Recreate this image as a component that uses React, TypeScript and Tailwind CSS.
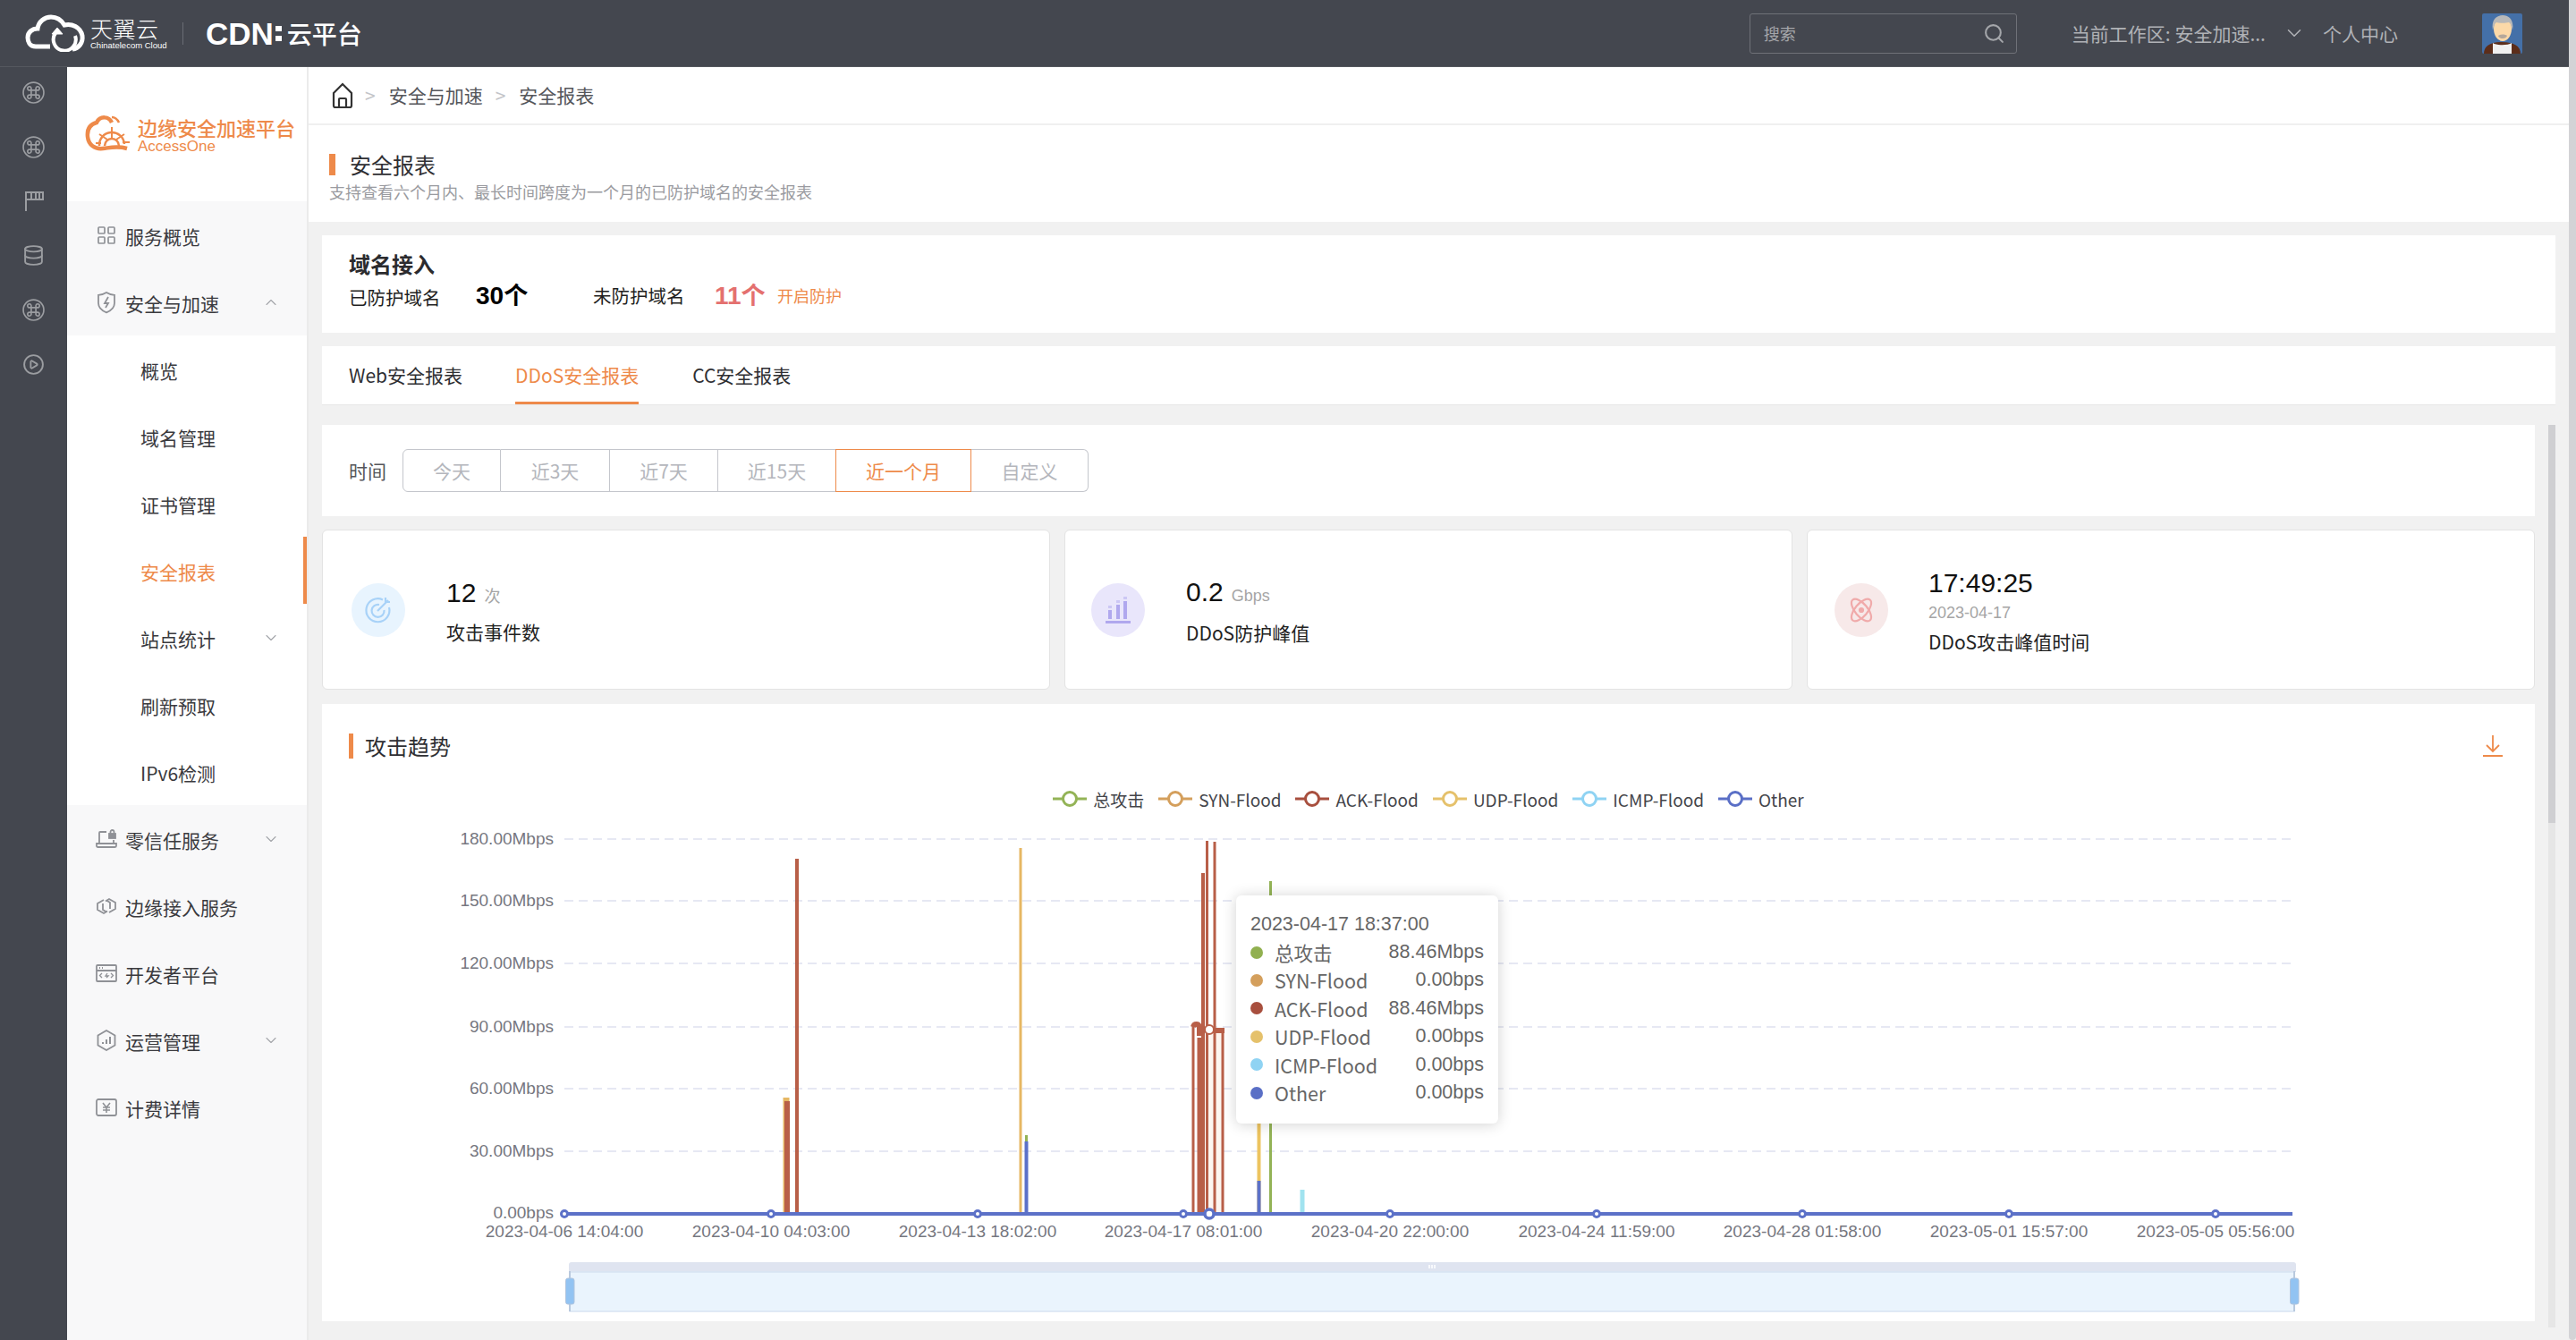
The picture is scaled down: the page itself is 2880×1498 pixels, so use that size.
import React from "react";
import { ChevronDown, ChevronUp, Database, CirclePlay, Search, LayoutGrid } from "lucide-react";

const CommandCircle = () => (
  <svg width="25" height="25" viewBox="0 0 24 24" fill="none" stroke="#9b9da1" strokeWidth="1.6">
    <circle cx="12" cy="12" r="11" />
    <path d="M9.5 9.5h5v5h-5zM9.5 9.5H8A2 2 0 1 1 9.5 8zM14.5 9.5V8A2 2 0 1 1 16 9.5zM14.5 14.5H16A2 2 0 1 1 14.5 16zM9.5 14.5V16A2 2 0 1 1 8 14.5z" />
  </svg>
);

const FlagIcon = () => (
  <svg width="24" height="24" viewBox="0 0 24 24" fill="none" stroke="#9b9da1" strokeWidth="2">
    <path d="M3 1v22M3 2h19v8H3M9 3v6M14 3v6M18 3v6" />
  </svg>
);

const ShieldBolt = () => (
  <svg width="24" height="26" viewBox="0 0 24 26" fill="none" stroke="#8f9196" strokeWidth="1.8">
    <path d="M12 2c3 2 6 2.6 9 2.8v9c0 5-4 8.600-9 10.500-5-1.900-9-5.500-9-10.500v-9C6 4.600 9 4 12 2z" />
    <path d="M14 7l-4 7h4l-3 5" />
  </svg>
);

const LaptopLock = () => (
  <svg width="24" height="24" viewBox="0 0 24 24" fill="none" stroke="#8f9196" strokeWidth="1.800">
    <path d="M12 4H5a1 1 0 0 0-1 1v12M1 17h22v2.500a1.500 1.500 0 0 1-1.500 1.500h-19A1.500 1.500 0 0 1 1 19.500zM20 13v4" />
    <rect x="15" y="6" width="7" height="5" fill="#8f9196" />
    <path d="M16.500 6V4a2 2 0 0 1 4 0v2" />
  </svg>
);

const HexLink = () => (
  <svg width="24" height="24" viewBox="0 0 24 24" fill="none" stroke="#8f9196" strokeWidth="1.800">
    <path d="M9 5L2 9v7l7 4 4-2.500M15 19l7-4V8l-7-4-4 2.500" />
    <path d="M8 9v7l4 2.500M16 15V8l-4-2.500" />
  </svg>
);

const CodeWindow = () => (
  <svg width="24" height="24" viewBox="0 0 24 24" fill="none" stroke="#8f9196" strokeWidth="1.800">
    <rect x="1" y="3" width="22" height="18" rx="1" />
    <path d="M1 9h22M4 6h1M7 6h1" />
    <path d="M7 12l-2.500 2.500L7 17M17 12l2.500 2.500L17 17M13 12l-2 3h3l-2 2" strokeWidth="1.300" />
  </svg>
);

const HexBars = () => (
  <svg width="24" height="24" viewBox="0 0 24 24" fill="none" stroke="#8f9196" strokeWidth="1.800">
    <path d="M12 1l9.500 5.500v11L12 23l-9.500-5.500v-11z" />
    <path d="M8 16v-2M12 16v-5M16 16V8" strokeWidth="2" />
  </svg>
);

const YenBox = () => (
  <svg width="24" height="24" viewBox="0 0 24 24" fill="none" stroke="#8f9196" strokeWidth="1.800">
    <rect x="1" y="3" width="22" height="18" rx="2" />
    <path d="M8 7l4 5 4-5M8 12h8M8 15h8M12 12v6" strokeWidth="1.600" />
  </svg>
);

const BrandCloud = () => (
  <svg width="68" height="42" viewBox="0 0 68 42" fill="none" stroke="#ffffff" strokeWidth="5">
    <path d="M28 36H12C5 36 3 30 3 26c0-6 5-10 11-10 1-8 8-13 15-13 7 0 12 4 15 9 8-2 18 2 20 12 1 8-4 14-11 15" />
    <path d="M56 24a12.500 12.500 0 1 1-22-3" strokeWidth="4" />
    <path d="M30 22l6-7 6 7z" fill="#ffffff" strokeWidth="1" />
  </svg>
);

const AccessLogo = () => (
  <svg width="54" height="44" viewBox="0 0 54 44" fill="none" stroke="#ee8a4a" strokeWidth="4.500">
    <path d="M30 9C27 2 17 1 13 9 6 11 2 16 3 25c1 9 8 14 17 13 9-1 16-3 27 0" />
    <path d="M38 9c-2-4-5-6-8-6" strokeWidth="2.500" />
    <path d="M16 35a14 14 0 0 1 28-2" strokeWidth="2.500" />
    <path d="M22 35a8 8 0 0 1 16 0" strokeWidth="2.500" />
    <path d="M30 14v13M16 22l9 6M44 22l-9 6M12 32h6M42 31h8" strokeWidth="2" />
  </svg>
);

const Avatar = () => (
  <svg width="45" height="45" viewBox="0 0 45 45">
    <rect width="45" height="45" rx="2" fill="#4470a8" />
    <path d="M2 45c0-8 6-13 20-13s21 5 21 13z" fill="#5c2d1a" />
    <path d="M12 45V33c4 3 17 3 21 0v12z" fill="#f0f0f0" />
    <ellipse cx="23" cy="17" rx="10" ry="14" fill="#fcd9a8" />
    <path d="M12 19c-2-12 4-17 11-17s13 5 11 17c-1-5-2-8-4-9-4 1-10 1-14 0-2 1-3 4-4 9z" fill="#b8b8b8" />
    <path d="M18 25c2-2 8-2 10 0-1 4-9 4-10 0z" fill="#b5a89a" />
  </svg>
);

const TargetIcon = () => (
  <svg width="32" height="32" viewBox="0 0 32 32" fill="none" stroke="#a8d2f8" strokeWidth="2.200">
    <path d="M21 4.500A13 13 0 1 0 28 13" />
    <path d="M17 10a7 7 0 1 0 5.500 6" />
    <path d="M15 17L27 5M24 2v5h5" />
  </svg>
);

const BarsIcon = () => (
  <svg width="30" height="32" viewBox="0 0 30 32" fill="#b0a8ee">
    <rect x="1" y="28" width="28" height="3" />
    <rect x="4" y="16" width="4" height="10" />
    <rect x="4" y="11" width="4" height="3" opacity="0.500" />
    <rect x="13" y="10" width="4" height="16" />
    <rect x="13" y="5" width="4" height="3" opacity="0.500" />
    <rect x="21" y="6" width="4" height="20" />
    <rect x="21" y="1" width="4" height="3" opacity="0.500" />
  </svg>
);

const AtomIcon = () => (
  <svg width="32" height="32" viewBox="0 0 32 32" fill="none" stroke="#f0aaaa" strokeWidth="2.200">
    <ellipse cx="16" cy="16" rx="7" ry="15" transform="rotate(40 16 16)" />
    <ellipse cx="16" cy="16" rx="7" ry="15" transform="rotate(-40 16 16)" />
    <circle cx="16" cy="16" r="2" fill="#f0aaaa" />
  </svg>
);

const railIcons = [
  <CommandCircle key="a" />,
  <CommandCircle key="b" />,
  <FlagIcon key="c" />,
  <Database key="d" size={25} color="#9b9da1" strokeWidth={1.8} />,
  <CommandCircle key="e" />,
  <CirclePlay key="f" size={25} color="#9b9da1" strokeWidth={1.8} />,
];

const SideRow = ({ icon, label, arrow, shaded }: { icon: React.ReactNode; label: string; arrow?: "up" | "down"; shaded?: boolean }) => (
  <div className={shaded ? "flex h-[75px] items-center pl-[32px] pr-[30px] bg-[#f8f8f9]" : "flex h-[75px] items-center pl-[32px] pr-[30px]"}>
    <span className="flex w-[24px] justify-center">{icon}</span>
    <span className="ml-[9px] flex-1 pt-[3px] text-[21px] leading-none text-[#3a3a3e]">{label}</span>
    {arrow === "up" && <ChevronUp size={20} color="#a3a5aa" strokeWidth={1.3} />}
    {arrow === "down" && <ChevronDown size={20} color="#a3a5aa" strokeWidth={1.3} />}
  </div>
);

const SubRow = ({ label, active, arrow }: { label: string; active?: boolean; arrow?: boolean }) => (
  <div
    className={
      active
        ? "flex h-[75px] items-center border-r-4 border-[#ee8a4a] pl-[82px] pr-[26px] text-[#ee8a4a]"
        : "flex h-[75px] items-center pl-[82px] pr-[30px] text-[#3a3a3e]"
    }
  >
    <span className="flex-1 pt-[3px] text-[21px] leading-none">{label}</span>
    {arrow && <ChevronDown size={20} color="#a3a5aa" strokeWidth={1.3} />}
  </div>
);

const Sidebar = () => (
  <aside className="flex w-[270px] shrink-0 flex-col border-r-2 border-[#ebebeb] bg-[#f8f8f9]">
    <div className="flex h-[150px] items-center bg-white pl-[20px]">
      <AccessLogo />
      <div className="ml-[5px] mt-[4px] flex flex-col">
        <span className="text-[22px] font-medium leading-[24px] text-[#ee8a4a]">边缘安全加速平台</span>
        <span className="font-['Liberation_Sans',sans-serif] text-[17px] leading-[20px] text-[#ee8a4a]">AccessOne</span>
      </div>
    </div>
    <SideRow shaded icon={<LayoutGrid size={26} color="#8f9196" strokeWidth={1.7} />} label="服务概览" />
    <SideRow shaded icon={<ShieldBolt />} label="安全与加速" arrow="up" />
    <div className="bg-white">
      <SubRow label="概览" />
      <SubRow label="域名管理" />
      <SubRow label="证书管理" />
      <SubRow label="安全报表" active />
      <SubRow label="站点统计" arrow />
      <SubRow label="刷新预取" />
      <SubRow label="IPv6检测" />
    </div>
    <SideRow icon={<LaptopLock />} label="零信任服务" arrow="down" />
    <SideRow icon={<HexLink />} label="边缘接入服务" />
    <SideRow icon={<CodeWindow />} label="开发者平台" />
    <SideRow icon={<HexBars />} label="运营管理" arrow="down" />
    <SideRow icon={<YenBox />} label="计费详情" />
  </aside>
);

const Header = () => (
  <header className="flex h-[75px] shrink-0 items-center border-b border-[#55585f] bg-[#44474f]">
    <div className="ml-[28px] flex items-center">
      <BrandCloud />
      <div className="ml-[5px] flex w-[78px] flex-col text-white">
        <span className="text-[25px] font-light leading-[26px] tracking-[0.5px]">天翼云</span>
        <span className="mt-[2px] whitespace-nowrap font-['Liberation_Sans',sans-serif] text-[9.500px] leading-[10px]">Chinatelecom Cloud</span>
      </div>
      <span className="ml-[25px] h-[25px] w-px bg-[#6a6d74]" />
      <span className="ml-[25px] font-['Liberation_Sans',sans-serif] text-[35px] font-bold leading-none text-white">CDN</span>
      <span className="ml-[2px] flex flex-col gap-[5px]">
        <span className="h-[6px] w-[7px] bg-white" />
        <span className="h-[6px] w-[7px] bg-white" />
      </span>
      <span className="ml-[6px] text-[28px] font-medium leading-none text-white">云平台</span>
    </div>
    <div className="ml-[1551px] flex h-[45px] w-[299px] items-center justify-between rounded-[3px] border border-[#6f7178] pl-[15px] pr-[12px]">
      <span className="text-[18px] leading-none text-[#a4a6aa]">搜索</span>
      <Search size={25} color="#a4a6aa" strokeWidth={2} />
    </div>
    <span className="ml-[61px] text-[21px] leading-none text-[#b0b2b6]">当前工作区: 安全加速...</span>
    <ChevronDown className="ml-[19px]" size={26} color="#b0b2b6" strokeWidth={1.4} />
    <span className="ml-[19px] text-[21px] leading-none text-[#b0b2b6]">个人中心</span>
    <span className="ml-[94px]">
      <Avatar />
    </span>
  </header>
);

const ranges = [
  { label: "今天", cls: "w-[110px] rounded-l-[6px] border border-[#c4c6cc] text-[#b4b6bc]" },
  { label: "近3天", cls: "w-[122px] border border-l-0 border-[#c4c6cc] text-[#b4b6bc]" },
  { label: "近7天", cls: "w-[121px] border border-l-0 border-[#c4c6cc] text-[#b4b6bc]" },
  { label: "近15天", cls: "w-[132px] border border-l-0 border-[#c4c6cc] text-[#b4b6bc]" },
  { label: "近一个月", cls: "w-[152px] border border-[#ee8a4a] -ml-px text-[#ee8a4a]" },
  { label: "自定义", cls: "w-[131px] rounded-r-[6px] border border-l-0 border-[#c4c6cc] text-[#b4b6bc]" },
];

const legend = [
  { label: "总攻击", color: "#93b356" },
  { label: "SYN-Flood", color: "#d49f5c" },
  { label: "ACK-Flood", color: "#a84f3e" },
  { label: "UDP-Flood", color: "#e5c16b" },
  { label: "ICMP-Flood", color: "#8fd3f3" },
  { label: "Other", color: "#5a6fc6" },
];

const tipRows = [
  { label: "总攻击", value: "88.46Mbps", color: "#91b050" },
  { label: "SYN-Flood", value: "0.00bps", color: "#d49f5c" },
  { label: "ACK-Flood", value: "88.46Mbps", color: "#a84f3e" },
  { label: "UDP-Flood", value: "0.00bps", color: "#e5c16b" },
  { label: "ICMP-Flood", value: "0.00bps", color: "#8fd3f3" },
  { label: "Other", value: "0.00bps", color: "#5a6fc6" },
];

const yAxis = [
  { y: 938, label: "180.00Mbps" },
  { y: 1007, label: "150.00Mbps" },
  { y: 1077, label: "120.00Mbps" },
  { y: 1148, label: "90.00Mbps" },
  { y: 1217, label: "60.00Mbps" },
  { y: 1287, label: "30.00Mbps" },
];

const xAxis = [
  { x: 631, label: "2023-04-06 14:04:00" },
  { x: 862, label: "2023-04-10 04:03:00" },
  { x: 1093, label: "2023-04-13 18:02:00" },
  { x: 1323, label: "2023-04-17 08:01:00" },
  { x: 1554, label: "2023-04-20 22:00:00" },
  { x: 1785, label: "2023-04-24 11:59:00" },
  { x: 2015, label: "2023-04-28 01:58:00" },
  { x: 2246, label: "2023-05-01 15:57:00" },
  { x: 2477, label: "2023-05-05 05:56:00" },
];

// vertical spikes: x, top y, stroke width, colour
const spikes = [
  { x: 879, top: 1227, w: 7, c: "#e6b763" },
  { x: 880, top: 1231, w: 6, c: "#b85f48" },
  { x: 891, top: 960, w: 4, c: "#b85f48" },
  { x: 1141, top: 948, w: 3, c: "#e6b763" },
  { x: 1147.500, top: 1269, w: 3, c: "#93b356" },
  { x: 1147.500, top: 1276, w: 4, c: "#5c71c8" },
  { x: 1334, top: 1145, w: 3, c: "#b85f48" },
  { x: 1342, top: 1160, w: 7, c: "#b85f48" },
  { x: 1345, top: 976, w: 4, c: "#b85f48" },
  { x: 1349.500, top: 940, w: 3, c: "#b85f48" },
  { x: 1358, top: 941, w: 3, c: "#b85f48" },
  { x: 1367, top: 1150, w: 3, c: "#b85f48" },
  { x: 1407.500, top: 1240, w: 4, c: "#edc460" },
  { x: 1407.500, top: 1320, w: 4, c: "#5c71c8" },
  { x: 1420.500, top: 1200, w: 3, c: "#b85f48" },
  { x: 1420.500, top: 985, w: 3, c: "#93b356" },
  { x: 1456, top: 1330, w: 5, c: "#a1e3ef" },
];

const Chart = () => (
  <div className="relative h-[571px] w-full">
    <svg width="2474" height="571" viewBox="360 906 2474 571" fontFamily="'Liberation Sans',sans-serif" fontSize="19" fill="#76777f">
      {yAxis.map((g) => (
        <g key={g.y}>
          <line x1="631" x2="2563" y1={g.y} y2={g.y} stroke="#e6e8f3" strokeWidth="2" strokeDasharray="10 6" />
          <text x="619" y={g.y + 1} textAnchor="end" dominantBaseline="middle">{g.label}</text>
        </g>
      ))}
      <text x="619" y="1357" textAnchor="end" dominantBaseline="middle">0.00bps</text>
      {xAxis.map((t) => (
        <text key={t.x} x={t.x} y="1378" textAnchor="middle" dominantBaseline="middle">{t.label}</text>
      ))}
      <rect x="1348" y="1155" width="18" height="202" fill="#fcf5f0" />
      <path d="M1334 1148c1-4 6-4 7 0v10M1350 1152h19" fill="none" stroke="#b85f48" strokeWidth="6" />
      {spikes.map((s, i) => (
        <line key={i} x1={s.x} x2={s.x} y1={s.top} y2="1357" stroke={s.c} strokeWidth={s.w} />
      ))}
      <circle cx="1352" cy="1151" r="5" fill="#ffffff" stroke="#b85f48" strokeWidth="2" />
      <line x1="631" x2="2563" y1="1357" y2="1357" stroke="#5c71c8" strokeWidth="4" />
      {xAxis.map((t) => (
        <circle key={t.x} cx={t.x} cy="1357" r="3.500" fill="#ffffff" stroke="#5c71c8" strokeWidth="3" />
      ))}
      <circle cx="1352" cy="1357" r="5" fill="#ffffff" stroke="#5c71c8" strokeWidth="3.500" />
      {/* data zoom */}
      <path d="M636 1422v-8a3 3 0 0 1 3-3h1925a3 3 0 0 1 3 3v8z" fill="#dfe4f0" />
      <rect x="637" y="1422" width="1928" height="44" fill="#eaf4fd" stroke="#d8e4f2" strokeWidth="1.500" />
      <path d="M1598 1414v4M1601 1414v4M1604 1414v4" stroke="#ffffff" strokeWidth="1.500" />
      <line x1="637" x2="637" y1="1421" y2="1466" stroke="#b9c9de" strokeWidth="2" />
      <line x1="2565" x2="2565" y1="1421" y2="1466" stroke="#b9c9de" strokeWidth="2" />
      <rect x="632.500" y="1429" width="9.500" height="29" rx="2.500" fill="#92c3f2" stroke="#b0c4de" />
      <rect x="2560.500" y="1429" width="9.500" height="29" rx="2.500" fill="#92c3f2" stroke="#b0c4de" />
    </svg>
    <div className="absolute left-[1022px] top-[95px] h-[255px] w-[293px] rounded-[6px] bg-white px-[16px] pt-[21px] shadow-[0_1px_16px_rgba(0,0,0,0.18)]">
      <div className="font-['Liberation_Sans','Noto_Sans_CJK_SC',sans-serif] text-[21.500px] leading-[22px] text-[#666]">2023-04-17 18:37:00</div>
      <div className="mt-[5px] flex flex-col">
        {tipRows.map((r) => (
          <div key={r.label} className="flex h-[31.400px] items-center">
            <span className="h-[14px] w-[14px] rounded-full" style={{ backgroundColor: r.color }} />
            <span className="ml-[13px] flex-1 text-[21.500px] leading-none text-[#666]">{r.label}</span>
            <span className="font-['Liberation_Sans',sans-serif] text-[21.500px] leading-none text-[#666]">{r.value}</span>
          </div>
        ))}
      </div>
    </div>
  </div>
);

export default function App() {
  return (
    <div className="flex h-[1498px] w-[2880px] overflow-hidden bg-[#f1f1f1] [font-family:'Noto_Sans_CJK_SC','Noto_Sans',sans-serif]">
      <div className="flex w-[2872px] flex-col">
        <Header />
        <div className="flex min-h-0 flex-1">
          <nav className="flex w-[75px] shrink-0 flex-col items-center gap-[36px] bg-[#44474f] pt-[16px]">
            {railIcons}
          </nav>
          <Sidebar />
          <main className="flex min-w-0 flex-1 flex-col">
            <div className="flex h-[65px] shrink-0 items-center border-b-2 border-[#f0f0f0] bg-white pl-[25px] text-[21px] leading-none text-[#55565b]">
              <svg width="26" height="30" viewBox="0 0 26 30" fill="none" stroke="#333" strokeWidth="2.200">
                <path d="M3 12L13 2l10 10v14a2 2 0 0 1-2 2H5a2 2 0 0 1-2-2z" />
                <path d="M9 28v-9a1 1 0 0 1 1-1h6a1 1 0 0 1 1 1v9" />
              </svg>
              <span className="ml-[12px] text-[#c3c4c8]">&gt;</span>
              <span className="ml-[15px]">安全与加速</span>
              <span className="ml-[14px] text-[#c3c4c8]">&gt;</span>
              <span className="ml-[15px]">安全报表</span>
            </div>
            <div className="flex h-[108px] shrink-0 flex-col bg-white pl-[23px] pt-[32px]">
              <div className="flex items-center">
                <span className="h-[24px] w-[7px] bg-[#ee8a4a]" />
                <span className="ml-[16px] text-[24px] leading-[24px] text-[#2f2f33]">安全报表</span>
              </div>
              <div className="mt-[6px] text-[18px] leading-[24px] text-[#9a9ba0]">支持查看六个月内、最长时间跨度为一个月的已防护域名的安全报表</div>
            </div>
            <div className="flex min-h-0 flex-1 flex-col pl-[15px] pr-[15px] pt-[15px]">
              <section className="flex h-[109px] shrink-0 flex-col bg-white pl-[30px] pt-[18px]">
                <div className="text-[24px] font-bold leading-[28px] text-[#2b2b2e]">域名接入</div>
                <div className="mt-[6px] flex items-center">
                  <span className="w-[142px] pt-[4px] text-[20.500px] leading-none text-[#1f1f22]">已防护域名</span>
                  <span className="w-[131px] font-bold leading-none text-black"><span className="font-['Liberation_Sans',sans-serif] text-[28px]">30</span><span className="text-[27px]">个</span></span>
                  <span className="w-[136px] text-[20.500px] leading-none text-[#1f1f22]">未防护域名</span>
                  <span className="w-[70px] font-bold leading-none text-[#e4706f]"><span className="font-['Liberation_Sans',sans-serif] text-[28px]">11</span><span className="text-[27px]">个</span></span>
                  <span className="text-[18px] leading-none text-[#ee8a4a]">开启防护</span>
                </div>
              </section>
              <section className="mt-[15px] flex h-[66px] shrink-0 items-stretch border-b border-[#e8e8e8] bg-white pl-[30px] text-[21px] text-[#2f2f33]">
                <span className="flex items-center leading-none">Web安全报表</span>
                <span className="ml-[59px] flex items-center border-b-[3px] border-[#ee8a4a] pt-[3px] leading-none text-[#ee8a4a]">DDoS安全报表</span>
                <span className="ml-[60px] flex items-center leading-none">CC安全报表</span>
              </section>
              <div className="mt-[22px] flex min-h-0 flex-1 gap-[15px]">
                <div className="flex w-[2474px] shrink-0 flex-col">
                  <section className="flex h-[102px] shrink-0 items-center bg-white pl-[30px]">
                    <span className="w-[60px] text-[21px] leading-none text-[#55565b]">时间</span>
                    <div className="flex">
                      {ranges.map((r) => (
                        <span key={r.label} className={"flex h-[48px] items-center justify-center text-[21px] leading-none " + r.cls}>{r.label}</span>
                      ))}
                    </div>
                  </section>
                  <div className="mt-[15px] grid h-[179px] shrink-0 grid-cols-3 gap-[16px]">
                    <div className="flex items-center rounded-[6px] border border-[#e3e3e3] bg-white pl-[32px]">
                      <span className="flex h-[60px] w-[60px] items-center justify-center rounded-full bg-[#e8f4fe]"><TargetIcon /></span>
                      <div className="ml-[46px] flex flex-col">
                        <div className="flex items-baseline font-['Liberation_Sans',sans-serif] text-[30px] leading-[34px] text-[#111]">12<span className="ml-[9px] text-[18px] text-[#a5a5a5] [font-family:'Noto_Sans_CJK_SC']">次</span></div>
                        <div className="mt-[14px] text-[21px] leading-none text-[#222]">攻击事件数</div>
                      </div>
                    </div>
                    <div className="flex items-center rounded-[6px] border border-[#e3e3e3] bg-white pl-[29px]">
                      <span className="flex h-[60px] w-[60px] items-center justify-center rounded-full bg-[#e9e6fb]"><BarsIcon /></span>
                      <div className="ml-[46px] flex flex-col">
                        <div className="flex items-baseline font-['Liberation_Sans',sans-serif] text-[30px] leading-[34px] text-[#111]">0.2<span className="ml-[9px] text-[18px] text-[#a5a5a5]">Gbps</span></div>
                        <div className="mt-[14px] text-[21px] leading-none text-[#222]">DDoS防护峰值</div>
                      </div>
                    </div>
                    <div className="flex items-center rounded-[6px] border border-[#e3e3e3] bg-white pl-[30px]">
                      <span className="flex h-[60px] w-[60px] items-center justify-center rounded-full bg-[#f7e9e9]"><AtomIcon /></span>
                      <div className="ml-[45px] flex flex-col">
                        <div className="font-['Liberation_Sans',sans-serif] text-[30px] leading-[34px] text-[#111]">17:49:25</div>
                        <div className="mt-[6px] font-['Liberation_Sans',sans-serif] text-[18px] leading-[20px] text-[#a5a5a5]">2023-04-17</div>
                        <div className="mt-[12px] text-[21px] leading-none text-[#222]">DDoS攻击峰值时间</div>
                      </div>
                    </div>
                  </div>
                  <section className="mt-[16px] flex h-[690px] shrink-0 flex-col bg-white">
                    <div className="flex h-[93px] shrink-0 items-center justify-between pl-[30px] pr-[36px]">
                      <div className="flex items-center">
                        <span className="h-[28px] w-[5px] bg-[#ee8a4a]" />
                        <span className="ml-[13px] text-[24px] leading-none text-[#2f2f33]">攻击趋势</span>
                      </div>
                      <svg width="22" height="24" viewBox="0 0 22 24" fill="none" stroke="#ee8a4a" strokeWidth="1.800">
                        <path d="M11 0v18M4 11l7 7 7-7M0 23h22" />
                      </svg>
                    </div>
                    <div className="flex h-[26px] shrink-0 items-center justify-center gap-[16px]">
                      {legend.map((l) => (
                        <span key={l.label} className="flex items-center gap-[7px]">
                          <svg width="38" height="20" viewBox="0 0 38 20">
                            <line x1="0" x2="38" y1="10" y2="10" stroke={l.color} strokeWidth="3" />
                            <circle cx="19" cy="10" r="7.500" fill="#ffffff" stroke={l.color} strokeWidth="3" />
                          </svg>
                          <span className="text-[19px] leading-none text-[#44454a]">{l.label}</span>
                        </span>
                      ))}
                    </div>
                    <Chart />
                  </section>
                </div>
                <div className="mb-[14px] w-[8px] shrink-0 bg-[#e6e6e6]">
                  <div className="h-[445px] w-full bg-[#cfcfd2]" />
                </div>
              </div>
            </div>
          </main>
        </div>
      </div>
      <div className="h-full w-[8px] shrink-0 rounded-b-[4px] bg-[#d3d3d6]" />
    </div>
  );
}
